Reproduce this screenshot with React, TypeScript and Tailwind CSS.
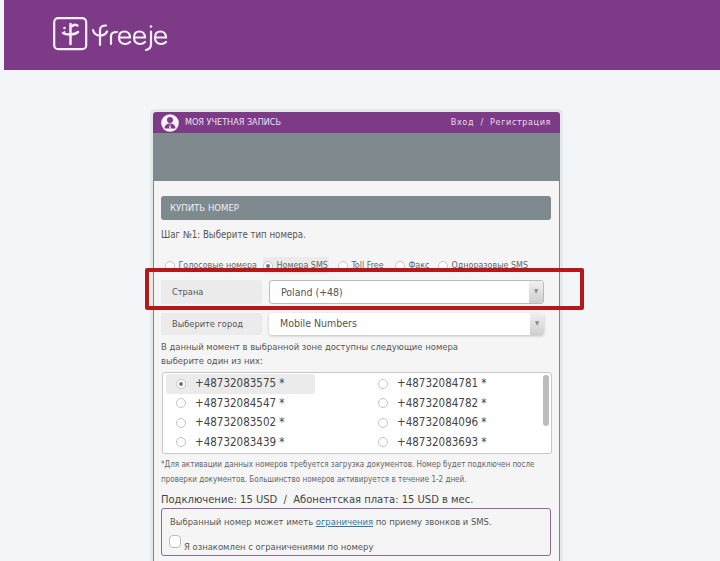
function Radio({ checked = false }: { checked?: boolean }) {
  return (
    <span className="flex h-[10px] w-[10px] shrink-0 items-center justify-center rounded-full border border-[#c4c4c4] bg-white">
      {checked && <span className="h-[4px] w-[4px] rounded-full bg-[#777]" />}
    </span>
  );
}

function Logo() {
  return (
    <svg width="116" height="40" viewBox="0 0 116 40" fill="none" stroke="#f6eef7" strokeLinecap="round" className="block">
      <rect x="1.2" y="1.2" width="32" height="31" rx="4" strokeWidth="2.2" />
      <path d="M17.5 7 V27 M10 16 C13 18 22 18 25 15 M19.5 9 C20.5 7.5 22.5 7.5 24.5 8.5" strokeWidth="2.5" />
      <circle cx="11.5" cy="11" r="1.3" fill="#f6eef7" stroke="none" />
      <circle cx="11.5" cy="15" r="0.9" fill="#f6eef7" stroke="none" />
      <path d="M47 28 V13 C47 10 49 8.5 53 8.5 M40 13 C41 17 43.5 18.5 47 18.5 C50 18.5 53 17 54 14.5" strokeWidth="2.2" />
      <path d="M58 27 V19 C58 16 60 15 64 15" strokeWidth="2.2" />
      <path d="M66 20.5 H77 C77 16.5 74.5 14.5 71.5 14.5 C68 14.5 66 17 66 20.5 C66 24.5 68.5 27 72 27 C74 27 75.5 26.5 77 25" strokeWidth="2.2" />
      <path d="M81 20.5 H92 C92 16.5 89.5 14.5 86.5 14.5 C83 14.5 81 17 81 20.5 C81 24.5 83.5 27 87 27 C89 27 90.5 26.5 92 25" strokeWidth="2.2" />
      <path d="M98 14.5 V27 C98 30.5 96 32.5 93 33" strokeWidth="2.2" />
      <circle cx="98" cy="9.5" r="1.3" fill="#f6eef7" stroke="none" />
      <path d="M102 20.5 H113 C113 16.5 110.5 14.5 107.5 14.5 C104 14.5 102 17 102 20.5 C102 24.5 104.5 27 108 27 C110 27 111.5 26.5 113 25" strokeWidth="2.2" />
    </svg>
  );
}

function UserIcon() {
  return (
    <svg width="18" height="18" viewBox="0 0 18 18" className="block">
      <circle cx="9" cy="9" r="8.8" fill="#f7f1f8" />
      <circle cx="9" cy="5.9" r="3" fill="#7d3a86" />
      <path d="M3.6 14.6 C3.6 11 6 9.5 9 9.5 C12 9.5 14.4 11 14.4 14.6 Z" fill="#7d3a86" />
      <path d="M9 9.5 L8 14.6 H10 Z" fill="#f7f1f8" />
    </svg>
  );
}

function SelectRow({ label, value, shadow = false }: { label: string; value: string; shadow?: boolean }) {
  return (
    <div className="flex items-stretch gap-[7px]">
      <div className={`flex w-[101px] items-center rounded-[3px] bg-[#ebebeb] pl-[11px] text-[9.2px] text-[#555] ${shadow ? "h-[22px]" : "h-[24px]"}`}>{label}</div>
      <div className={`flex w-[275px] overflow-hidden rounded-[3px] bg-white ${shadow ? "h-[22px] shadow-[0_1px_3px_rgba(0,0,0,0.22)]" : "h-[24px] border border-[#bbb]"}`}>
        <div className={`flex flex-1 items-center pl-[11px] text-[10.5px] text-[#555] ${shadow ? "" : "pt-[2px]"}`}>{value}</div>
        <div className="flex w-[14px] justify-center bg-gradient-to-b from-[#f0f0f0] to-[#cfcfcf] pt-[7px] text-[6px] leading-none text-[#888]">▼</div>
      </div>
    </div>
  );
}

function NumberCell({ n, checked = false }: { n: string; checked?: boolean }) {
  return (
    <div className={`flex h-[19.5px] w-[149px] items-center gap-[9px] rounded-[3px] pl-[10px] text-[11.5px] text-[#444] ${checked ? "bg-[#ebebeb]" : ""}`}>
      <Radio checked={checked} />
      <span>{n} *</span>
    </div>
  );
}

function TypeOption({ label, width, checked = false }: { label: string; width: string; checked?: boolean }) {
  return (
    <div className={`pl-[4px] ${width}`}>
      <div className={`flex h-[17px] w-fit items-center gap-[3.5px] whitespace-nowrap rounded-[3px] pr-[1px] text-[8.9px] text-[#666] ${checked ? "bg-[#ebebeb]" : ""}`}>
        <Radio checked={checked} />
        <span>{label}</span>
      </div>
    </div>
  );
}

const left = ["+48732083575", "+48732084547", "+48732083502", "+48732083439"];
const right = ["+48732084781", "+48732084782", "+48732084096", "+48732083693"];

export default function App() {
  return (
    <div className="relative h-[561px] w-[720px] overflow-hidden bg-[#f2f6f8] font-['DejaVu_Sans_Condensed','DejaVu_Sans',sans-serif]">
      <div className="ml-[4px] flex h-[70px] items-start bg-[#7d3a86] pl-[49px] pt-[17px]">
        <Logo />
      </div>

      <div className="ml-[150px] mt-[39px] w-[413px] rounded-t-[5px] border-[3px] border-b-0 border-[#e6e9ea]">
        <div className="flex h-[21px] items-center justify-between rounded-t-[3px] bg-[#7d3a86] pl-[8px] pr-[9px] text-white">
          <div className="flex items-center gap-[6px]">
            <UserIcon />
            <span className="text-[9px] text-[#f0e2f2]">МОЯ УЧЕТНАЯ ЗАПИСЬ</span>
          </div>
          <span className="text-[9px] tracking-[0.6px] text-[#eadcec]">Вход&nbsp;&nbsp;/&nbsp;&nbsp;Регистрация</span>
        </div>
        <div className="h-[48px] bg-[#7f8a8f]" />

        <div className="h-[380px] border-x border-[#8f7b96] bg-[#f5f5f5] pl-[7px] pr-[8px] pt-[15px]">
          <div className="flex h-[24px] items-center rounded-[3px] bg-[#7f8a8f] pl-[9px] pt-[1px] text-[9.5px] text-[#eef0f1]">КУПИТЬ НОМЕР</div>
          <div className="mt-[9px] text-[9.6px] leading-[12px] text-[#555]">Шаг №1: Выберите тип номера.</div>

          <div className="mt-[16px] flex">
            <TypeOption label="Голосовые номера" width="w-[98px]" />
            <TypeOption label="Номера SMS" width="w-[75px]" checked />
            <TypeOption label="Toll Free" width="w-[57px]" />
            <TypeOption label="Факс" width="w-[43px]" />
            <TypeOption label="Одноразовые SMS" width="w-[90px]" />
          </div>

          <div className="mt-[6px] flex flex-col gap-[9px]">
            <SelectRow label="Страна" value="Poland (+48)" />
            <SelectRow label="Выберите город" value="Mobile Numbers" shadow />
          </div>

          <div className="mt-[5px] text-[9.4px] leading-[14px] text-[#555]">
            В данный момент в выбранной зоне доступны следующие номера<br />выберите один из них:
          </div>

          <div className="relative ml-[1px] mt-[4px] flex h-[82px] w-[390px] rounded-[3px] border border-[#c8c8c8] bg-white pl-[3px] pt-[1px]">
            <div className="flex w-[202px] flex-col">
              {left.map((n, i) => <NumberCell key={n} n={n} checked={i === 0} />)}
            </div>
            <div className="flex flex-col">
              {right.map((n) => <NumberCell key={n} n={n} />)}
            </div>
            <div className="absolute right-[2px] top-[2px] h-[51px] w-[6px] rounded-[3px] bg-[#bcbcbc]" />
          </div>

          <div className="mt-[3px] text-[8px] leading-[15px] text-[#666]">
            *Для активации данных номеров требуется загрузка документов. Номер будет подключен после<br />
            проверки документов. Большинство номеров активируется в течение 1-2 дней.
          </div>

          <div className="mt-[5px] text-[11.1px] leading-[16px] text-[#444]">Подключение: 15 USD&nbsp;&nbsp;/&nbsp;&nbsp;Абонентская плата: 15 USD в мес.</div>

          <div className="h-[48px] w-[390px] rounded-[3px] border border-[#8d6a94] pl-[8px] pt-[6px] text-[9.4px] text-[#555]">
            <div className="leading-[14px]">Выбранный номер может иметь <span className="text-[#2a7aa8] underline">ограничения</span> по приему звонков и SMS.</div>
            <div className="mt-[8px] flex items-start gap-[3px] leading-[14px]">
              <span className="-ml-[1px] -mt-[2px] h-[13px] w-[12px] rounded-[4px] border border-[#bbb] bg-white" />
              <span className="mt-[3px]">Я ознакомлен с ограничениями по номеру</span>
            </div>
          </div>
        </div>
      </div>

      <div className="absolute left-[145px] top-[268px] h-[42px] w-[439px] rounded-[2px] border-[4px] border-[#b5171a]" />
    </div>
  );
}
